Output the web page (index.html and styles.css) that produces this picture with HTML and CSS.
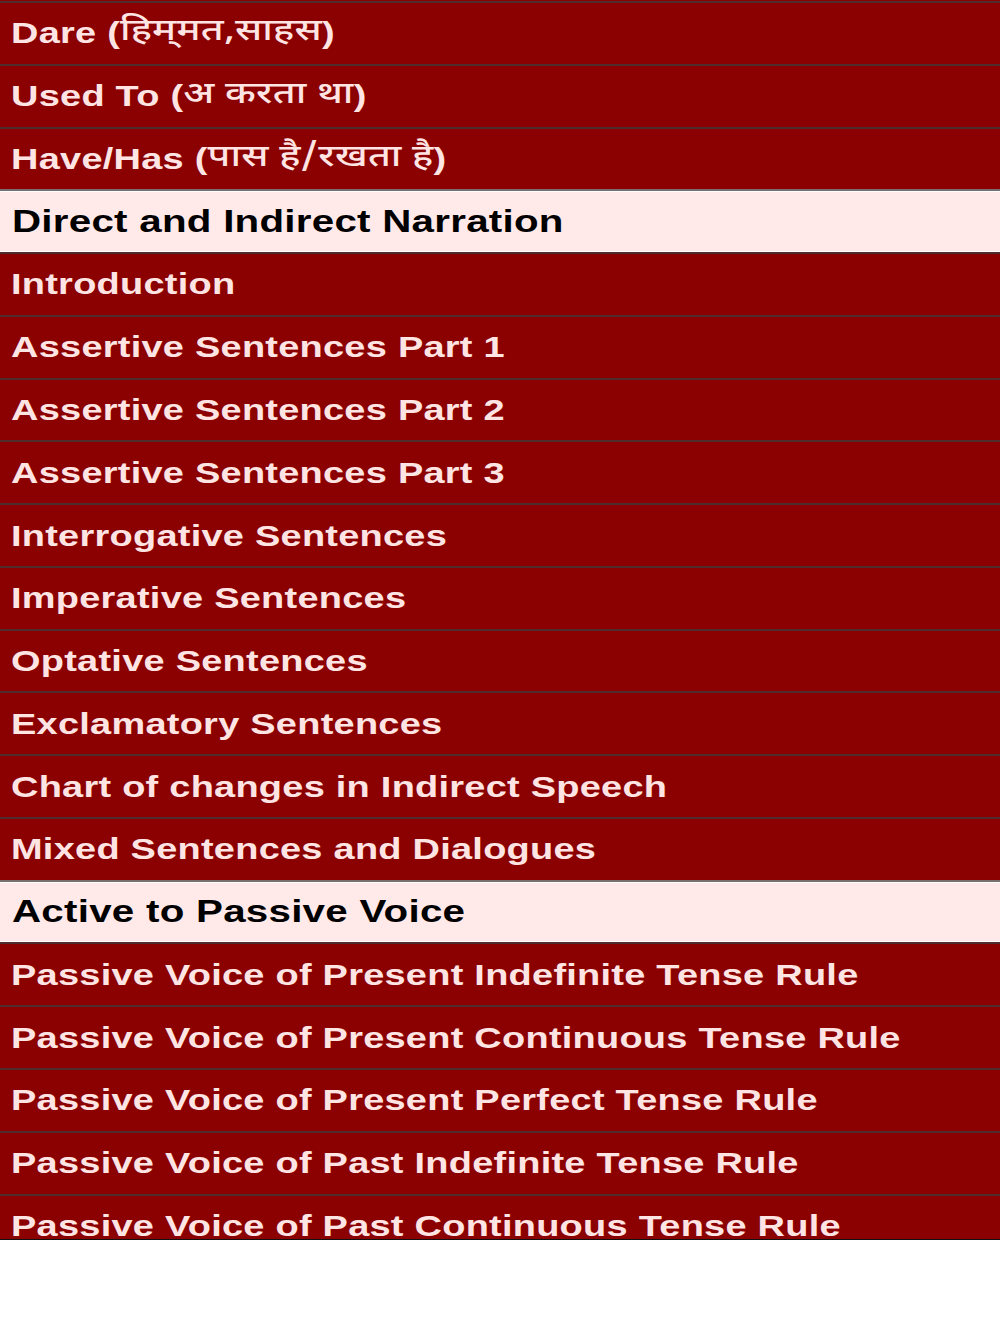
FILE: index.html
```html
<!DOCTYPE html>
<html lang="en">
<head>
<meta charset="utf-8">
<title>English Grammar</title>
<link rel="stylesheet" href="styles.css">
</head>
<body>
<div class="menu">
  <ul class="list">
    <li class="item"><span class="label">Dare (<span class="hi">हिम्&zwnj;मत,साहस</span>)</span></li>
    <li class="item"><span class="label">Used To (<span class="hi">अ करता था</span>)</span></li>
    <li class="item"><span class="label">Have/Has (<span class="hi">पास है/रखता है</span>)</span></li>
    <li class="item head"><span class="label">Direct and Indirect Narration</span></li>
    <li class="item"><span class="label">Introduction</span></li>
    <li class="item"><span class="label">Assertive Sentences Part 1</span></li>
    <li class="item"><span class="label">Assertive Sentences Part 2</span></li>
    <li class="item"><span class="label">Assertive Sentences Part 3</span></li>
    <li class="item"><span class="label">Interrogative Sentences</span></li>
    <li class="item"><span class="label">Imperative Sentences</span></li>
    <li class="item"><span class="label">Optative Sentences</span></li>
    <li class="item"><span class="label">Exclamatory Sentences</span></li>
    <li class="item"><span class="label">Chart of changes in Indirect Speech</span></li>
    <li class="item"><span class="label">Mixed Sentences and Dialogues</span></li>
    <li class="item head"><span class="label">Active to Passive Voice</span></li>
    <li class="item"><span class="label">Passive Voice of Present Indefinite Tense Rule</span></li>
    <li class="item"><span class="label">Passive Voice of Present Continuous Tense Rule</span></li>
    <li class="item"><span class="label">Passive Voice of Present Perfect Tense Rule</span></li>
    <li class="item"><span class="label">Passive Voice of Past Indefinite Tense Rule</span></li>
    <li class="item"><span class="label">Passive Voice of Past Continuous Tense Rule</span></li>
  </ul>
</div>
</body>
</html>
```
FILE: styles.css
```css
html, body {
  margin: 0;
  padding: 0;
  background: #ffffff;
}

.menu {
  height: 1238px;
  overflow: hidden;
  border-bottom: 1px solid #111111;
  background: #8b0000;
  padding-top: 1px;
  box-sizing: content-box;
}

.list {
  list-style: none;
  margin: 0;
  padding: 0;
}

.item {
  box-sizing: border-box;
  height: 62.78px;
  border-top: 2px solid #4f2d2d;
  background: #8b0000;
  color: #ffe4e4;
  display: flex;
  align-items: center;
  padding-left: 11px;
  font-family: "Liberation Sans", Arial, "Noto Sans Devanagari", "Lohit Devanagari", sans-serif;
  font-weight: 700;
  font-size: 30px;
  line-height: 34px;
  white-space: nowrap;
}

.label {
  display: inline-block;
  transform: scaleX(1.265);
  transform-origin: left center;
  letter-spacing: 0.2px;
}

.hi {
  font-family: "Noto Sans Devanagari", "Lohit Devanagari", "Noto Sans", sans-serif;
  font-weight: 500;
  font-size: 31px;
  line-height: 34px;
  vertical-align: top;
}

.head {
  background: #ffe9e9;
  color: #000000;
  border-top: 2px solid #7a6f6f;
  box-shadow: inset 0 1px 0 #ffffff, inset 0 -1px 0 #ffffff;
  padding-left: 12px;
  font-size: 31px;
}

.head .label {
  transform: scaleX(1.3);
}
```
